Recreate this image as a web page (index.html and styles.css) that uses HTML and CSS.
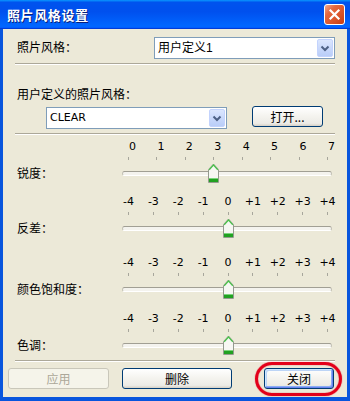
FILE: index.html
```html
<!DOCTYPE html>
<html lang="zh-CN">
<head>
    <meta charset="UTF-8">
    <title>照片风格设置</title>
    <link rel="stylesheet" href="styles.css">
</head>
<body>
<div class="window">
    <div class="titlebar">
        <span class="title">照片风格设置</span>
        <span class="close-btn">
            <svg width="19" height="19" viewBox="0 0 19 19"><path d="M5.5 5.5 L13.5 13.5 M13.5 5.5 L5.5 13.5" stroke="#fff" stroke-width="2.2" stroke-linecap="square"/></svg>
        </span>
    </div>

    <div class="client">
        <div class="row style-row">
            <span class="label">照片风格：</span>
            <div class="combo wide">
                <span class="combo-text">用户定义1</span>
                <span class="combo-arrow"><svg width="14" height="16" viewBox="0 0 14 16"><path d="M3.5 6.5 L7 10 L10.5 6.5" fill="none" stroke="#4d6185" stroke-width="2"/></svg></span>
            </div>
        </div>
        <div class="sep"></div>

        <div class="label sub">用户定义的照片风格：</div>
        <div class="row file-row">
            <div class="combo file">
                <span class="combo-text latin">CLEAR</span>
                <span class="combo-arrow"><svg width="14" height="16" viewBox="0 0 14 16"><path d="M3.5 6.5 L7 10 L10.5 6.5" fill="none" stroke="#4d6185" stroke-width="2"/></svg></span>
            </div>
            <button class="btn open">打开...</button>
        </div>
        <div class="sep"></div>

        <!-- 锐度 0..7 -->
        <div class="slider s1">
            <span class="label">锐度：</span>
            <div class="scale shift"><span>0</span><span>1</span><span>2</span><span>3</span><span>4</span><span>5</span><span>6</span><span>7</span></div>
            <div class="ticks"><i></i><i></i><i></i><i></i><i></i><i></i><i></i><i></i></div>
            <div class="track">
                <div class="groove"></div>
                <span class="thumb" style="--pos: 0.4286"><svg width="11" height="20" viewBox="0 0 11 20"><path d="M0.5 6.5 L5.5 1 L10.5 6.5 V19.5 H0.5 Z" fill="#f7f7f3" stroke="#949a8e"/><path d="M1.2 6.8 L5.5 2 L9.8 6.8" fill="none" stroke="#47c247" stroke-width="1.2"/><rect x="1" y="16" width="9" height="3" fill="#21a121"/><rect x="1" y="15" width="9" height="1" fill="#7bd47b"/></svg></span>
            </div>
        </div>

        <div class="slider s2">
            <span class="label">反差：</span>
            <div class="scale"><span>-4</span><span>-3</span><span>-2</span><span>-1</span><span>0</span><span>+1</span><span>+2</span><span>+3</span><span>+4</span></div>
            <div class="ticks"><i></i><i></i><i></i><i></i><i></i><i></i><i></i><i></i><i></i></div>
            <div class="track">
                <div class="groove"></div>
                <span class="thumb" style="--pos: 0.5"><svg width="11" height="20" viewBox="0 0 11 20"><path d="M0.5 6.5 L5.5 1 L10.5 6.5 V19.5 H0.5 Z" fill="#f7f7f3" stroke="#949a8e"/><path d="M1.2 6.8 L5.5 2 L9.8 6.8" fill="none" stroke="#47c247" stroke-width="1.2"/><rect x="1" y="16" width="9" height="3" fill="#21a121"/><rect x="1" y="15" width="9" height="1" fill="#7bd47b"/></svg></span>
            </div>
        </div>

        <div class="slider s3">
            <span class="label">颜色饱和度：</span>
            <div class="scale"><span>-4</span><span>-3</span><span>-2</span><span>-1</span><span>0</span><span>+1</span><span>+2</span><span>+3</span><span>+4</span></div>
            <div class="ticks"><i></i><i></i><i></i><i></i><i></i><i></i><i></i><i></i><i></i></div>
            <div class="track">
                <div class="groove"></div>
                <span class="thumb" style="--pos: 0.5"><svg width="11" height="20" viewBox="0 0 11 20"><path d="M0.5 6.5 L5.5 1 L10.5 6.5 V19.5 H0.5 Z" fill="#f7f7f3" stroke="#949a8e"/><path d="M1.2 6.8 L5.5 2 L9.8 6.8" fill="none" stroke="#47c247" stroke-width="1.2"/><rect x="1" y="16" width="9" height="3" fill="#21a121"/><rect x="1" y="15" width="9" height="1" fill="#7bd47b"/></svg></span>
            </div>
        </div>

        <div class="slider s4">
            <span class="label">色调：</span>
            <div class="scale"><span>-4</span><span>-3</span><span>-2</span><span>-1</span><span>0</span><span>+1</span><span>+2</span><span>+3</span><span>+4</span></div>
            <div class="ticks"><i></i><i></i><i></i><i></i><i></i><i></i><i></i><i></i><i></i></div>
            <div class="track">
                <div class="groove"></div>
                <span class="thumb" style="--pos: 0.5"><svg width="11" height="20" viewBox="0 0 11 20"><path d="M0.5 6.5 L5.5 1 L10.5 6.5 V19.5 H0.5 Z" fill="#f7f7f3" stroke="#949a8e"/><path d="M1.2 6.8 L5.5 2 L9.8 6.8" fill="none" stroke="#47c247" stroke-width="1.2"/><rect x="1" y="16" width="9" height="3" fill="#21a121"/><rect x="1" y="15" width="9" height="1" fill="#7bd47b"/></svg></span>
            </div>
        </div>

        <div class="sep last"></div>

        <div class="buttons">
            <button class="btn apply" disabled>应用</button>
            <button class="btn delete">删除</button>
            <div class="close-wrap">
                <button class="btn close default">关闭</button>
                <span class="ring"></span>
            </div>
        </div>
    </div>
</div>
</body>
</html>
```

FILE: styles.css
```css
* {
    box-sizing: border-box;
}
body {
    margin: 0;
    font-family: "Liberation Sans", "Noto Sans CJK SC", sans-serif;
    font-size: 12px;
    color: #000;
}
.window {
    width: 350px;
    height: 401px;
    display: flex;
    flex-direction: column;
    background: #0855dd;
}
.titlebar {
    height: 29px;
    flex: none;
    display: flex;
    align-items: center;
    justify-content: space-between;
    padding: 0 5px 0 7px;
    background: linear-gradient(180deg, #0997ff, #0053ee 8%, #0050ee 40%, #06f 88%, #06f 93%, #005bff 95%, #003dd7 96%, #003dd7);
}
.title {
    color: #fff;
    font: bold 13px "Noto Sans CJK SC", sans-serif;
    letter-spacing: 0.6px;
    text-shadow: 1px 1px #0a1f7a;
}
.close-btn {
    width: 21px;
    height: 21px;
    border: 1px solid #fff;
    border-radius: 3px;
    display: flex;
    align-items: center;
    justify-content: center;
    background: linear-gradient(135deg, #f3a88e 0%, #e5683f 30%, #da5429 65%, #c63d13 100%);
}
.client {
    flex: 1;
    margin: 0 3px 4px;
    padding: 0 12px;
    background: #ece9d8;
    display: flex;
    flex-direction: column;
}
.label {
    padding-left: 2px;
    line-height: 16px;
    white-space: nowrap;
}
.row {
    display: flex;
    align-items: center;
}
.style-row {
    margin-top: 8px;
    height: 22px;
}
.combo {
    height: 22px;
    width: 181px;
    border: 1px solid #7f9db9;
    background: #fff;
    display: flex;
    align-items: center;
    padding: 0 1px 0 3px;
}
.combo.wide {
    margin-left: auto;
}
.combo-text {
    flex: 1;
    line-height: 16px;
}
.latin {
    font-family: "DejaVu Sans", sans-serif;
    font-size: 11px;
}
.combo-arrow {
    width: 16px;
    height: 18px;
    border: 1px solid #c3d3fd;
    border-radius: 2px;
    background: linear-gradient(180deg, #dbe6fe, #b9cdf8);
    display: flex;
    align-items: center;
    justify-content: center;
}
.sep {
    flex: none;
    margin-top: 4px;
    border-top: 1px solid #aca899;
    border-bottom: 1px solid #fff;
}
.sub {
    margin-top: 22px;
}
.file-row {
    margin-top: 4px;
    align-items: flex-start;
}
.combo.file {
    margin-left: 31px;
}
.btn {
    height: 21px;
    padding: 0;
    font-family: "Noto Sans CJK SC", sans-serif;
    font-size: 12px;
    line-height: 17px;
    color: #000;
    border: 1px solid #003c74;
    border-radius: 3px;
    background: linear-gradient(180deg, #fff 0%, #f4f3ee 50%, #ecebe6 86%, #d6d0c5 100%);
}
.btn.open {
    width: 71px;
    margin: -1px 0 0 25px;
}

/* sliders */
.slider {
    display: grid;
    grid-template-columns: 107px 210px;
    grid-template-rows: 14px 3px 20px;
    row-gap: 3px;
}
.s1 { margin-top: 5px; }
.s2 { margin-top: 12px; }
.s3 { margin-top: 18px; }
.s4 { margin-top: 13px; }
.slider .label {
    grid-column: 1;
    grid-row: 3;
    align-self: center;
    padding-top: 2px;
}
.scale {
    grid-column: 2;
    grid-row: 1;
    display: flex;
    justify-content: space-between;
    margin: 0 4px 0 6px;
    font-family: "DejaVu Sans", sans-serif;
    font-size: 11px;
    line-height: 14px;
}
.scale.shift {
    margin: 0 0 0 10px;
}
.scale span {
    width: 1px;
    display: flex;
    justify-content: center;
    white-space: nowrap;
}
.ticks {
    grid-column: 2;
    grid-row: 2;
    display: flex;
    justify-content: space-between;
    margin: 0 4px 0 6px;
}
.ticks i {
    width: 1px;
    height: 3px;
    background: #a7a69c;
}
.track {
    grid-column: 2;
    grid-row: 3;
    position: relative;
    display: flex;
    align-items: center;
}
.groove {
    flex: 1;
    height: 5px;
    border: 1px solid #c4c2b6;
    border-top-color: #a19f94;
    border-bottom-color: #fff;
    border-radius: 3px;
    background: #f4f3ee;
}
.thumb {
    position: absolute;
    top: 0;
    left: calc(var(--pos) * 200px + 0.5px);
    width: 11px;
    height: 20px;
}
.thumb svg {
    display: block;
}
.sep.last {
    margin-top: 5px;
}

/* bottom buttons */
.buttons {
    display: flex;
    margin: 6px 0 0 -7px;
}
.btn.apply {
    width: 101px;
    color: #aca899;
    border-color: #c9c7ba;
    background: #f5f4ea;
}
.btn.delete {
    width: 110px;
    margin-left: 13px;
}
.close-wrap {
    position: relative;
    margin-left: 32px;
}
.btn.close {
    width: 70px;
}
.btn.default {
    box-shadow: inset -1px -1px #6982ee, inset 1px 1px #cee7ff, inset -2px -2px #89adf4, inset 2px 2px #bcd4f6;
}
.ring {
    position: absolute;
    left: -9px;
    right: -8px;
    top: -6px;
    bottom: -7px;
    border: 3px solid #e3001a;
    border-radius: 18px;
    box-shadow: 0 0 1px #e3001a, inset 0 0 1px #e3001a;
}
```
